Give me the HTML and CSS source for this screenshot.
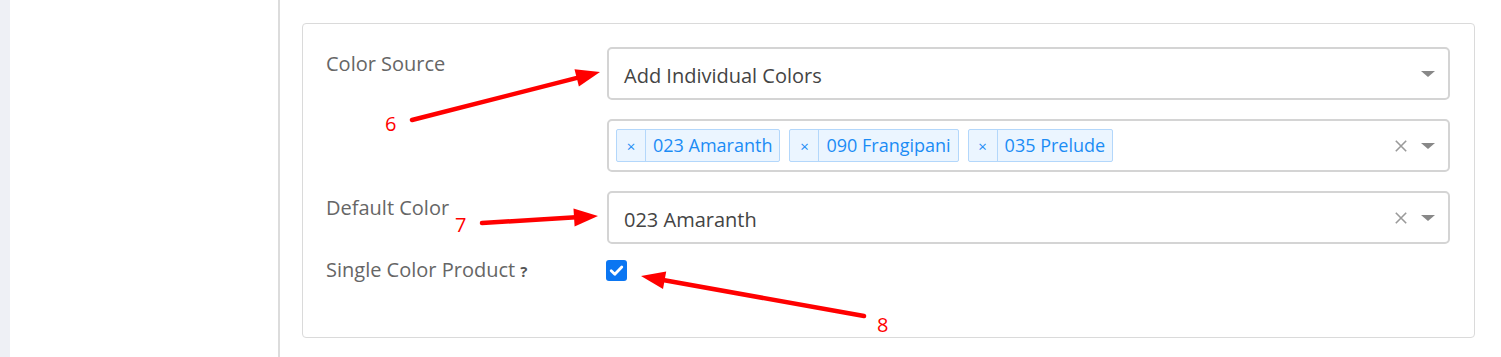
FILE: index.html
```html
<!DOCTYPE html>
<html>
<head>
<meta charset="utf-8">
<link rel="stylesheet" href="styles.css">
</head>
<body>
<div class="page">
  <div class="strip"></div>
  <div class="sidebar"></div>
  <div class="main">
    <div class="panel">
      <div class="form">
        <div class="label">Color Source</div>
        <div class="select">
          <span class="value">Add Individual Colors</span>
          <span class="caret"></span>
        </div>

        <div class="label"></div>
        <div class="select multi">
          <div class="tags">
            <span class="tag"><span class="tag-x">×</span><span class="tag-text">023 Amaranth</span></span>
            <span class="tag"><span class="tag-x">×</span><span class="tag-text">090 Frangipani</span></span>
            <span class="tag"><span class="tag-x">×</span><span class="tag-text">035 Prelude</span></span>
          </div>
          <svg class="clear" width="12" height="12" viewBox="0 0 12 12"><path d="M0.8 0.8 L11.2 11.2 M11.2 0.8 L0.8 11.2" stroke="#9a9a9a" stroke-width="1.6"/></svg>
          <span class="caret"></span>
        </div>

        <div class="label">Default Color</div>
        <div class="select">
          <span class="value">023 Amaranth</span>
          <svg class="clear" width="12" height="12" viewBox="0 0 12 12"><path d="M0.8 0.8 L11.2 11.2 M11.2 0.8 L0.8 11.2" stroke="#9a9a9a" stroke-width="1.6"/></svg>
          <span class="caret"></span>
        </div>

        <div class="label label-check">Single Color Product <span class="help">?</span></div>
        <div class="check-cell">
          <span class="checkbox">
            <svg width="21" height="21" viewBox="0 0 21 21"><path d="M5.2 10.8 L8.8 14.2 L15.8 7" fill="none" stroke="#fff" stroke-width="2.8" stroke-linecap="round" stroke-linejoin="round"/></svg>
          </span>
        </div>
      </div>
    </div>
  </div>
</div>

<svg class="annot" width="1501" height="357" viewBox="0 0 1501 357">
  <g fill="#ff0000" stroke="#ff0000">
    <line x1="412" y1="120" x2="578" y2="77.6" stroke-width="4.5" stroke-linecap="round"/>
    <polygon points="600,72 578.9,86.6 574.5,69.2" stroke="none"/>
    <line x1="482" y1="223" x2="576" y2="217.3" stroke-width="4.5" stroke-linecap="round"/>
    <polygon points="598,216 574.6,226.4 573.5,208.4" stroke="none"/>
    <line x1="864" y1="316" x2="663" y2="280" stroke-width="4.5" stroke-linecap="round"/>
    <polygon points="641,276 666.2,271.4 663,289.1" stroke="none"/>
  </g>
  <g class="num" fill="#ff0000">
    <text x="385" y="131">6</text>
    <text x="455" y="232">7</text>
    <text x="877" y="332">8</text>
  </g>
</svg>
</body>
</html>
```

FILE: styles.css
```css
html, body {
  margin: 0;
  padding: 0;
  background: #ffffff;
  font-family: "Open Sans", "Liberation Sans", sans-serif;
}

.page {
  display: flex;
  width: 1501px;
  height: 357px;
  overflow: hidden;
}

.strip {
  width: 10px;
  background: #eef0f5;
  flex: none;
}

.sidebar {
  width: 268px;
  flex: none;
  background: #fff;
  border-right: 2px solid #dcdcdc;
}

.main {
  flex: 1;
  padding: 23px 26px 0 22px;
}

.panel {
  border: 1px solid #dadada;
  border-radius: 4px;
  padding: 23px 24px 55px 23px;
}

.form {
  display: grid;
  grid-template-columns: 281px 1fr;
  row-gap: 19px;
}

.label {
  font-size: 20px;
  color: #666;
  padding-top: 6px;
  line-height: 22px;
  white-space: nowrap;
}

.select {
  height: 53px;
  box-sizing: border-box;
  border: 2px solid #d4d4d4;
  border-radius: 5px;
  display: flex;
  align-items: center;
  padding: 0 13px 0 15px;
}

.value {
  flex: 1;
  font-size: 20px;
  color: #444;
  padding-top: 4px;
}

.caret {
  width: 0;
  height: 0;
  border-left: 7.5px solid transparent;
  border-right: 7.5px solid transparent;
  border-top: 6px solid #888;
  margin-left: 14px;
}

.clear {
  display: block;
  flex: none;
}

.multi {
  padding-left: 7px;
}

.tags {
  flex: 1;
  display: flex;
  gap: 9px;
}

.tag {
  display: flex;
  height: 33px;
  box-sizing: border-box;
  border: 1px solid #b3d7fb;
  background: #ebf5ff;
  border-radius: 2px;
  color: #1b8cf5;
  font-size: 18px;
  align-items: stretch;
}

.tag-x {
  width: 28px;
  border-right: 1px solid #b3d7fb;
  display: flex;
  align-items: center;
  justify-content: center;
  font-size: 15px;
}

.tag-text {
  padding: 0 7px 2px 7px;
  display: flex;
  align-items: center;
}

.label-check {
  padding-top: 0;
  line-height: 21px;
  margin-top: -4px;
}

.help {
  font-size: 15px;
  font-weight: 700;
  color: #555;
}

.check-cell {
  margin-top: -3px;
  height: 21px;
}

.checkbox {
  display: block;
  width: 21px;
  height: 21px;
  background: #0b76f2;
  border-radius: 3px;
  margin-left: -1px;
}

.checkbox svg {
  display: block;
}

.annot {
  position: absolute;
  left: 0;
  top: 0;
  pointer-events: none;
}

.num text {
  font-family: "Open Sans", "Liberation Sans", sans-serif;
  font-size: 20px;
}
```
